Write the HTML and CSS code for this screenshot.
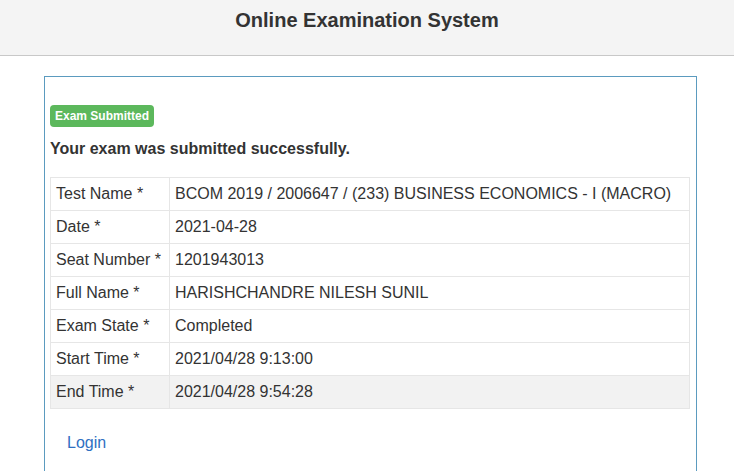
FILE: index.html
```html
<!DOCTYPE html>
<html>
<head>
<meta charset="utf-8">
<title>Online Examination System</title>
<link rel="stylesheet" href="styles.css">
</head>
<body>
<header class="topbar">
  <h1 class="title">Online Examination System</h1>
</header>
<main class="panel">
  <span class="badge">Exam Submitted</span>
  <h2 class="message">Your exam was submitted successfully.</h2>
  <table class="details">
    <tr><td class="label">Test Name *</td><td>BCOM 2019 / 2006647 / (233) BUSINESS ECONOMICS - I (MACRO)</td></tr>
    <tr><td class="label">Date *</td><td>2021-04-28</td></tr>
    <tr><td class="label">Seat Number *</td><td>1201943013</td></tr>
    <tr><td class="label">Full Name *</td><td>HARISHCHANDRE NILESH SUNIL</td></tr>
    <tr><td class="label">Exam State *</td><td>Completed</td></tr>
    <tr><td class="label">Start Time *</td><td>2021/04/28 9:13:00</td></tr>
    <tr class="shaded"><td class="label">End Time *</td><td>2021/04/28 9:54:28</td></tr>
  </table>
  <a class="login" href="#">Login</a>
</main>
</body>
</html>
```

FILE: styles.css
```css
html, body {
  margin: 0;
  padding: 0;
  background: #fff;
  font-family: "Liberation Sans", Arial, sans-serif;
  color: #333;
}
.topbar {
  background: #f4f4f4;
  border-bottom: 1px solid #c8c8c8;
  height: 55px;
  display: flex;
  justify-content: center;
}
.title {
  margin: 0;
  padding-top: 8px;
  font-size: 20px;
  line-height: 24px;
  font-weight: bold;
  color: #333;
}
.panel {
  margin: 20px 37px 0 44px;
  border: 1px solid #5b9bbf;
  border-bottom: none;
  padding: 28px 5px 30px 5px;
  height: 400px;
  box-sizing: border-box;
}
.badge {
  display: inline-block;
  background: #5cb85c;
  color: #fff;
  font-size: 12px;
  font-weight: bold;
  line-height: 14px;
  padding: 4px 5px 4px 5px;
  border-radius: 4px;
}
.message {
  margin: 11px 0 17px 0;
  font-size: 16px;
  line-height: 22px;
  font-weight: bold;
  color: #333;
}
.details {
  width: 640px;
  border-collapse: collapse;
  font-size: 16px;
}
.details td {
  border: 1px solid #e6e6e6;
  padding: 5px 5px;
  line-height: 22px;
  color: #333;
}
.details td.label {
  width: 108px;
}
.details tr.shaded td {
  background: #f2f2f2;
}
.login {
  display: inline-block;
  margin: 23px 0 0 17px;
  font-size: 16px;
  line-height: 22px;
  color: #2e6fc2;
  text-decoration: none;
}
```
